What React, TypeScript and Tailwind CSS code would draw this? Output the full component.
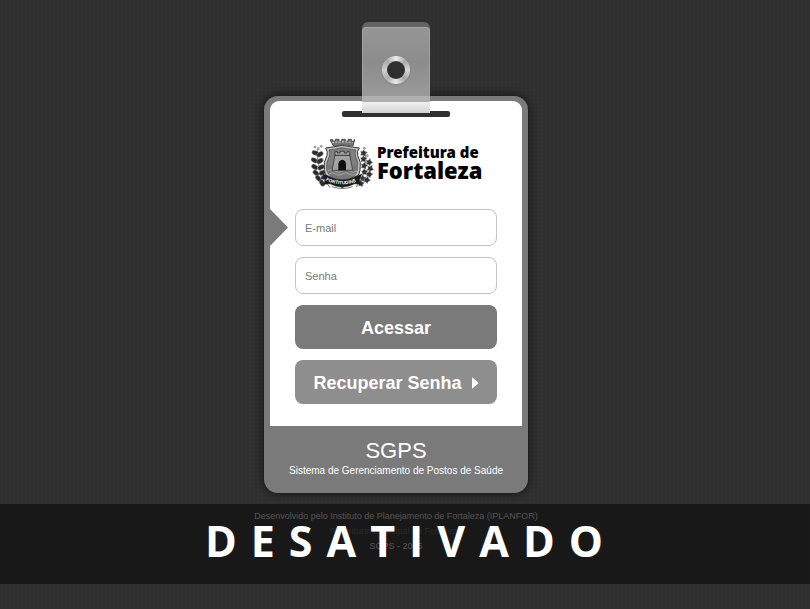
import React from "react";

const leftLeaves = [
  [16, 54, 20], [30, 58, -35], [13, 76, 30], [30, 78, -35], [14, 96, 35],
  [33, 97, -30], [18, 114, 40], [37, 113, -25], [25, 130, 50], [43, 127, -15],
  [36, 144, 60],
];

const rightLeaves = [
  [160, 54, 30], [160, 72, 20], [177, 82, -35], [162, 92, 30],
  [180, 101, -20], [163, 111, 15], [177, 118, -40], [158, 130, 20], [170, 135, -30],
  [152, 146, -50],
];

function Crest() {
  return (
    <svg viewBox="0 0 195 174" className="h-[58px] w-[65px] shrink-0" aria-hidden="true">
      <g fill="none" stroke="#333" strokeWidth="2">
        <path d="M22 42 Q18 110 60 158" />
        <path d="M166 48 Q176 115 138 156" />
      </g>
      {leftLeaves.map(([x, y, r]) => (
        <ellipse key={`${x}-${y}`} cx={x} cy={y} rx="11" ry="7" fill="#2c2c2c" stroke="#ddd" strokeWidth="1" transform={`rotate(${r} ${x} ${y})`} />
      ))}
      {rightLeaves.map(([x, y, r]) => (
        <path key={`${x}-${y}`} d={`M${x - 10} ${y} l5 -3 l1 -7 l6 4 l8 -2 l-3 8 l3 7 l-9 0 l-5 4 l-1 -7 z`} fill="#333" stroke="#ccc" strokeWidth="1" transform={`rotate(${r} ${x} ${y})`} />
      ))}
      <g fill="#999">
        <circle cx="15" cy="36" r="4" />
        <circle cx="25" cy="41" r="4" />
        <circle cx="34" cy="34" r="4" />
        <circle cx="163" cy="40" r="4" />
        <circle cx="172" cy="62" r="4" />
        <circle cx="168" cy="82" r="4" />
      </g>
      <path d="M60 14 h9 v5 h7 v-6 h11 v6 h8 v-6 h11 v6 h8 v-6 h10 v6 h8 v-5 h2 l-5 19 q-29 -7 -59 0 z" fill="#777" stroke="#222" strokeWidth="2" />
      <path d="M66 23 q30 -5 62 0" fill="none" stroke="#ddd" strokeWidth="3" strokeDasharray="6 4" />
      <path d="M47 39 Q70 36 97 31 Q123 36 148 39 Q140 50 143 61 Q155 81 150 106 Q146 128 125 139 Q108 146 97 159 Q85 146 68 139 Q47 128 43 106 Q39 81 51 61 Q54 50 47 39 Z" fill="#c4c4c4" stroke="#333" strokeWidth="3" />
      <path d="M57 45 Q76 42 97 38 Q118 42 138 45 Q134 54 137 64 Q147 84 142 104 Q139 121 121 131 Q106 138 97 147 Q87 138 73 131 Q54 121 50 104 Q47 84 58 64 Q61 54 57 45 Z" fill="#808080" stroke="#444" strokeWidth="2" />
      <path d="M51 89 h92 v14 q-4 21 -21 28 q-15 6 -25 16 q-9 -10 -24 -16 q-17 -7 -22 -28 z" fill="#777" />
      <path d="M53 108 q11 -8 22 0 t22 0 t22 0 t22 0 M57 117 q10 -7 20 0 t20 0 t20 0 t20 0" fill="none" stroke="#bbb" strokeWidth="2" />
      <path d="M75 60 V50 h7 v4 h8 v-5 h13 v5 h8 v-4 h8 v10 L128 106 H66 Z" fill="#a2a2a2" stroke="#222" strokeWidth="2" />
      <path d="M74 61 h47" stroke="#333" strokeWidth="3" />
      <path d="M85 106 V86 Q87 75 97 74 Q107 75 108 86 V106 Z" fill="#111" />
      <path d="M39 118 l16 5 q42 24 84 0 l16 -5 l-7 17 l5 13 l-19 -2 q-37 20 -74 0 l-19 2 l5 -13 z" fill="#191919" stroke="#222" strokeWidth="2" />
      <path id="crestMotto" d="M47 136 Q97 160 148 136" fill="none" />
      <text fill="#fff" fontSize="14" fontWeight="700" fontFamily="Liberation Sans, sans-serif">
        <textPath href="#crestMotto">FORTITUDINE</textPath>
      </text>
      <path d="M65 155 Q97 166 128 155" fill="none" stroke="#777" strokeWidth="3" />
    </svg>
  );
}

function Clip() {
  return (
    <div className="relative z-10 -mb-[17px] h-[91px] w-[68px] overflow-hidden rounded-t-md bg-[#646464] pt-[5px]" aria-hidden="true">
      <div className="h-[69px] rounded-t-[4px] border-x border-t border-[#a3a3a3] bg-linear-to-b from-[#969696] via-[#8c8c8c] to-[#9a9a9a] pt-7">
        <div className="mx-auto size-7 rounded-full bg-[conic-gradient(#eee,#aaa,#d8d8d8,#a6a6a6,#e8e8e8,#b0b0b0,#d0d0d0,#aaa,#eee)] p-[5px] shadow-sm">
          <div className="size-[18px] rounded-full bg-[#303030]" />
        </div>
      </div>
      <div className="h-[6px] bg-[#b0b0b0]" />
      <div className="h-[11px] bg-linear-to-b from-[#f2f2f2] to-[#d2d2d2]" />
    </div>
  );
}

const fieldClass =
  "block h-[37px] w-full rounded-lg border border-[#c4c4c4] bg-white px-[9px] text-[11px] text-[#333] outline-none placeholder:text-[#777]";

const buttonClass =
  "flex h-11 items-center justify-center gap-[9px] rounded-lg pt-[2px] text-lg font-bold text-white";

export default function App() {
  return (
    <div className="relative min-h-screen bg-[#303030] bg-[radial-gradient(#323232_1px,transparent_1px)] bg-size-[4px_4px] font-['Liberation_Sans',Arial,sans-serif]">
      <div className="flex flex-col items-center pt-[22px] pr-[18px]">
        <Clip />
        <main className="w-[264px] rounded-[14px] bg-[#7a7a7a] px-[6px] pt-[5px] shadow-[0_0_10px_#111]">
          <form className="rounded-t-[9px] bg-white pb-[22px]" onSubmit={(e) => e.preventDefault()}>
            <div className="flex justify-center pt-[10px]">
              <div className="h-[6px] w-[108px] rounded-[2px] bg-[#303030]" aria-hidden="true" />
            </div>
            <h1 className="flex items-center pt-[18px] pl-10 font-['Noto_Sans','Open_Sans',sans-serif] font-black text-black">
              <Crest />
              <span className="flex flex-col pb-1 pl-[2px] whitespace-nowrap">
                <span className="text-[15px] leading-4">Prefeitura de</span>
                <span className="text-[22px] leading-5">Fortaleza</span>
              </span>
            </h1>
            <div className="mt-4 flex items-center">
              <svg viewBox="0 0 18 37" className="h-[37px] w-[18px]" aria-hidden="true">
                <path d="M0 0 L18 18.5 L0 37 Z" fill="#7a7a7a" />
              </svg>
              <div className="flex-1 pr-[25px] pl-[7px]">
                <input type="email" aria-label="E-mail" placeholder="E-mail" className={fieldClass} />
              </div>
            </div>
            <div className="flex flex-col gap-[11px] px-[25px] pt-[11px]">
              <input type="password" aria-label="Senha" placeholder="Senha" className={fieldClass} />
              <button type="submit" className={`${buttonClass} bg-[#7a7a7a]`}>
                Acessar
              </button>
              <button type="button" className={`${buttonClass} bg-[#8e8e8e]`}>
                Recuperar Senha
                <svg viewBox="0 0 8 12" className="h-3 w-2" fill="currentColor" aria-hidden="true">
                  <path d="M1 1 Q1 0 2 1 L7 5.3 Q7.7 6 7 6.7 L2 11 Q1 12 1 11 Z" />
                </svg>
              </button>
            </div>
          </form>
          <div className="h-[67px] pt-[13px] text-center text-white">
            <h2 className="text-[22px] leading-6">SGPS</h2>
            <p className="text-[10px] leading-4 whitespace-nowrap">Sistema de Gerenciamento de Postos de Saúde</p>
          </div>
        </main>
        <footer className="pt-4 text-center text-[9px] leading-[15px] text-[#a8a8a8]">
          <p>Desenvolvido pelo Instituto de Planejamento de Fortaleza (IPLANFOR)</p>
          <p className="text-[#505050]">Prefeitura Municipal de Fortaleza</p>
          <p>SGPS - 2016</p>
        </footer>
      </div>
      <div className="absolute inset-x-0 top-[504px] flex h-20 items-center justify-center bg-black/50 pb-2">
        <strong className="pl-3 font-['Open_Sans',sans-serif] text-[43px] leading-none font-bold tracking-[14px] text-white">DESATIVADO</strong>
      </div>
    </div>
  );
}
